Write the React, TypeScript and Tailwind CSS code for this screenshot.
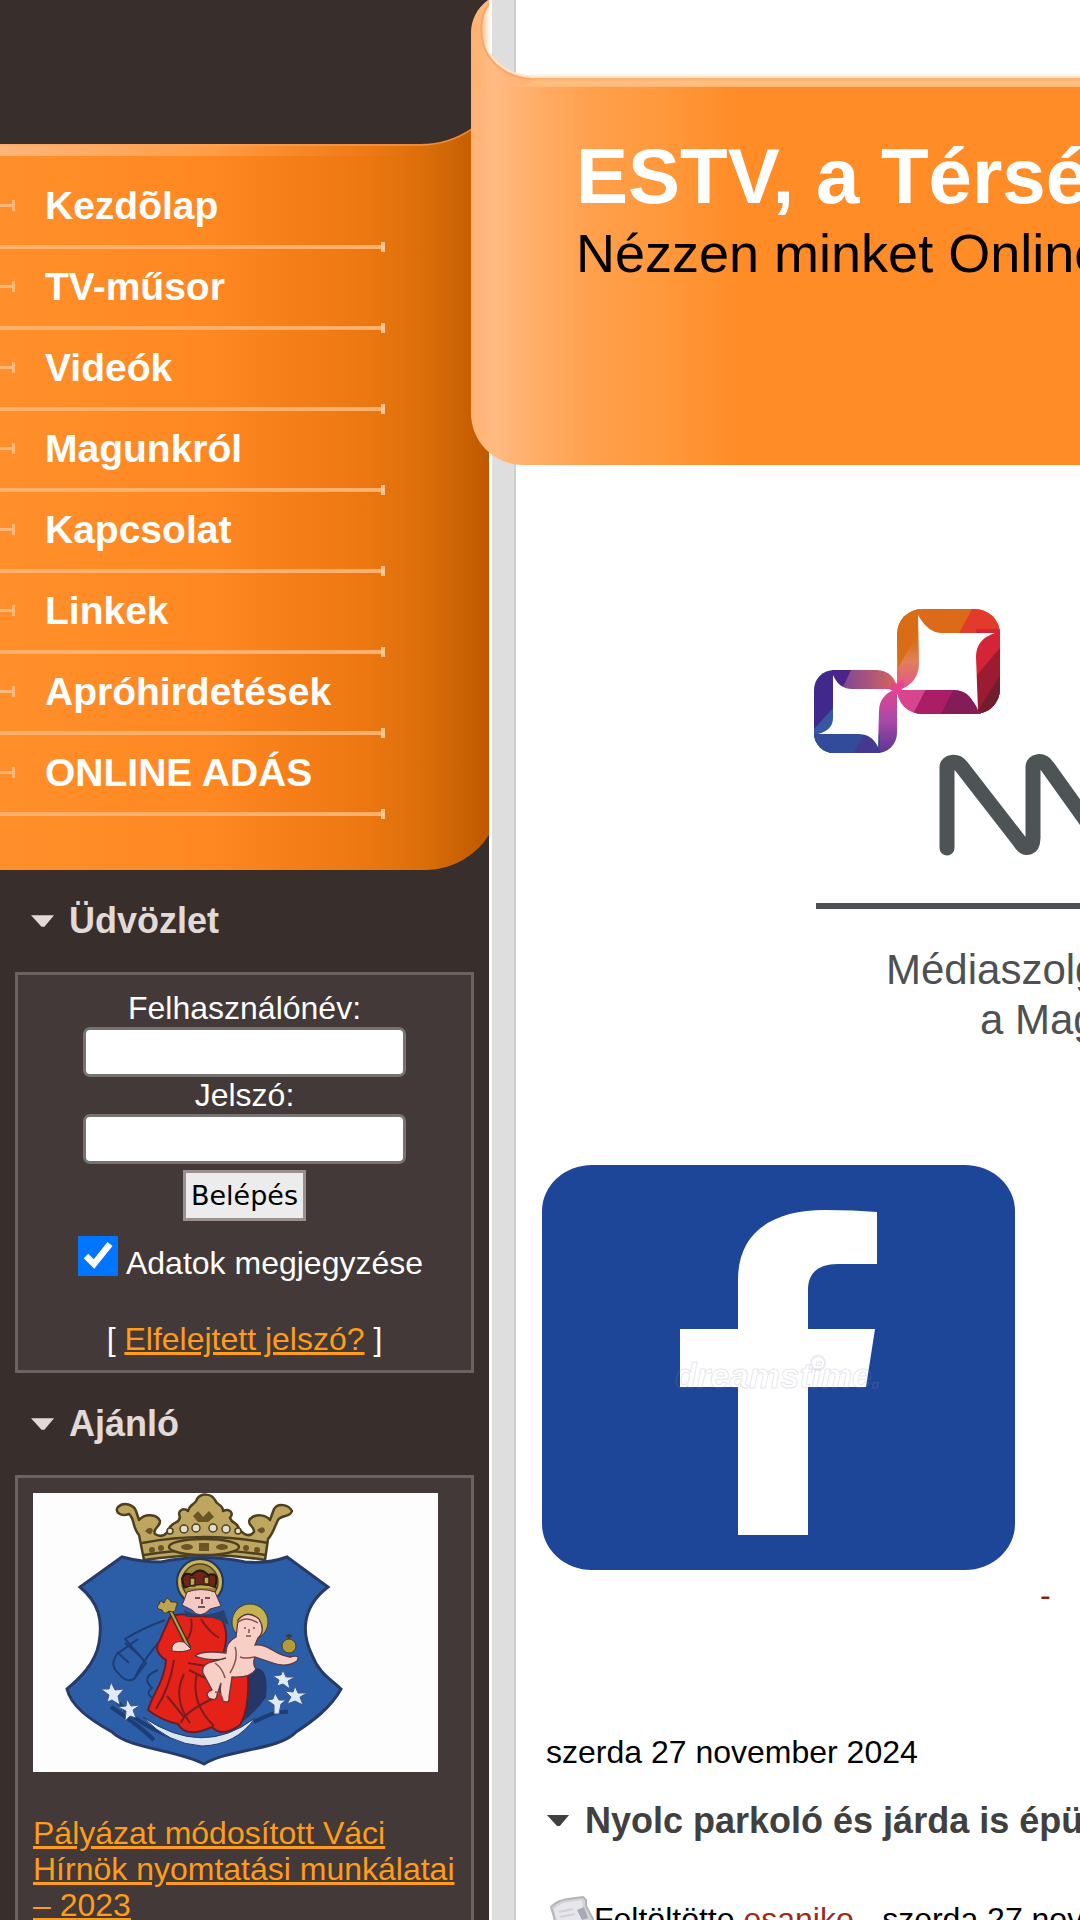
const menuItems = [
  'Kezdõlap',
  'TV-műsor',
  'Videók',
  'Magunkról',
  'Kapcsolat',
  'Linkek',
  'Apróhirdetések',
  'ONLINE ADÁS',
];

function MenuBackground() {
  return (
    <svg className="absolute bottom-0 left-0 h-[771px] w-[489px]" viewBox="0 0 489 771" aria-hidden="true">
      <defs>
        <linearGradient id="menu-fill" x1="0" x2="1" y1="0" y2="0">
          <stop offset="0" stopColor="#ff8f2b" />
          <stop offset="0.42" stopColor="#ff8822" />
          <stop offset="0.6" stopColor="#f67e19" />
          <stop offset="0.75" stopColor="#ec7711" />
          <stop offset="0.86" stopColor="#dc6f0a" />
          <stop offset="0.95" stopColor="#c96103" />
          <stop offset="1" stopColor="#bf5800" />
        </linearGradient>
        <linearGradient id="menu-shine" x1="0" x2="1" y1="0" y2="0">
          <stop offset="0" stopColor="#ffb679" />
          <stop offset="0.5" stopColor="#ff9d48" />
          <stop offset="1" stopColor="#f07a12" stopOpacity="0" />
        </linearGradient>
      </defs>
      <path d="M0 45 H420 A92 92 0 0 0 489 14 V736 A76 76 0 0 1 427 771 H0 Z" fill="url(#menu-fill)" />
      <path d="M0 45 H425 L400 57 H0 Z" fill="url(#menu-shine)" />
      <path d="M0 46 H420 A92 92 0 0 0 472 30" fill="none" stroke="#f9a55c" strokeOpacity="0.7" strokeWidth="1.5" />
    </svg>
  );
}

function SideMenu() {
  return (
    <nav className="relative pt-[24px] pb-[54px]">
      <MenuBackground />
      <ul className="relative">
        {menuItems.map((item) => (
          <li key={item} className="relative flex h-[81px] items-center pb-[6px]">
            <span className="h-[3px] w-[12px] bg-[#ffb87c]" />
            <span className="h-[11px] w-[3px] bg-[#ffb87c]" />
            <a href="#" className="ml-[30px] text-[39px] leading-none font-bold text-white">
              {item}
            </a>
            <span className="absolute bottom-0 left-0 h-[4px] w-[384px] bg-[#ffb06a]" />
            <span className="absolute -bottom-[3px] left-[381px] h-[10px] w-[4px] bg-[#ffc591]" />
          </li>
        ))}
      </ul>
    </nav>
  );
}

function Arrow({ className }: { className: string }) {
  return (
    <svg className={className} viewBox="0 0 24 13" aria-hidden="true">
      <path d="M0 0 H24 L14 12 H11 Z" fill="currentColor" />
    </svg>
  );
}

function PanelTitle({ children }: { children: string }) {
  return (
    <div className="flex h-[102px] items-center gap-[15px] pl-[16px] text-[#e2dad8]">
      <Arrow className="h-[13px] w-[23px]" />
      <h2 className="text-[36px] leading-none font-bold">{children}</h2>
    </div>
  );
}

function LoginPanel() {
  const fieldStyle = 'block h-[50px] w-[323px] rounded-[7px] border-[3px] border-[#767373] bg-white px-2 text-black';

  return (
    <form className="flex flex-col items-center border-[3px] border-[#6c6361] bg-[#423938] pt-[15px] pb-[13px] text-white">
      <label htmlFor="username" className="leading-[37px]">Felhasználónév:</label>
      <input id="username" type="text" className={fieldStyle} />
      <label htmlFor="password" className="leading-[37px]">Jelszó:</label>
      <input id="password" type="password" className={fieldStyle} />
      <button
        type="button"
        className="mt-[6px] h-[51px] w-[123px] border-[3px] border-[#989091] bg-[#ececec] font-['DejaVu_Sans'] text-[27px] leading-none text-black"
      >
        Belépés
      </button>
      <div className="mt-[15px] ml-[12px] flex gap-[8px]">
        <input id="remember" type="checkbox" defaultChecked className="size-10" />
        <label htmlFor="remember" className="pt-[9px]">Adatok megjegyzése</label>
      </div>
      <p className="mt-[40px]">
        [ <a href="#" className="text-[#ff9c1a] underline">Elfelejtett jelszó?</a> ]
      </p>
    </form>
  );
}

function Crest() {
  return (
    <svg className="h-[279px] w-[405px] bg-[#fdfdfd]" viewBox="0 0 405 279" role="img" aria-label="Címer">
      {/* crown */}
      <g fill="#bfa660" stroke="#4d4020" strokeWidth="2.5" strokeLinejoin="round">
        <path d="M111 67 L106 42 C99 34 102 26 96 21 C88 24 81 19 85 14 C91 8 101 12 103 18 L106 27 C112 20 124 21 127 28 C127 35 119 35 122 41 C130 46 135 40 137 34 C141 28 146 31 147 24 C144 18 150 14 155 18 C157 10 163 12 164 6 C168 0 178 0 182 7 C184 13 190 11 190 18 C197 15 201 20 197 25 C199 31 205 29 206 36 C212 43 217 44 221 39 C222 33 213 32 217 26 C223 20 233 22 237 27 L241 16 C245 9 256 12 259 18 C257 25 249 21 245 27 C241 35 240 41 235 46 L232 67 C190 60 150 61 111 67 Z" />
        <path d="M109 50 Q171 38 235 50" fill="none" />
        <path d="M111 62 Q171 52 232 62" fill="none" />
        <ellipse cx="171" cy="54" rx="35" ry="8" />
      </g>
      <g fill="#6b5527">
        <ellipse cx="154" cy="54" rx="6" ry="3" />
        <rect x="166" y="50" width="10" height="8" />
        <ellipse cx="189" cy="54" rx="6" ry="3" />
        <circle cx="119" cy="57" r="3" />
        <circle cx="128" cy="55" r="3" />
        <circle cx="213" cy="55" r="3" />
        <circle cx="224" cy="57" r="3" />
        <path d="M160 23 l5 -5 5 6 6 -6 5 6 -6 5 h-10 z" />
        <path d="M112 38 q5 -6 8 -1 q-2 8 -8 1 M224 37 q7 -6 8 1 q-4 5 -8 -1" />
      </g>
      <g fill="#e2dfd0" stroke="#4d4020" strokeWidth="1.5">
        <circle cx="151" cy="36" r="4" />
        <circle cx="163" cy="35" r="4" />
        <circle cx="180" cy="35" r="4" />
        <circle cx="193" cy="36" r="4" />
        <circle cx="137" cy="38" r="3" />
        <circle cx="205" cy="38" r="3" />
      </g>

      {/* shield */}
      <path
        d="M89 64 Q108 69 128 69 Q170 60 212 69 Q235 71 254 64 L295 94 C266 116 270 144 279 162 C286 180 296 185 308 196 C297 216 278 229 263 239 C247 257 195 256 171 271 C145 257 96 256 79 239 C56 226 38 213 34 196 C47 185 62 171 66 150 C70 127 66 110 47 94 Z"
        fill="#2c5ea8"
        stroke="#273b68"
        strokeWidth="3"
      />
      <g fill="none" stroke="#1d3d75" strokeWidth="2">
        <path d="M132 127 Q108 136 92 146 L113 170 L101 186 Q93 190 86 181 Q76 172 84 161 L105 146" />
        <path d="M84 159 L96 170 M92 150 L107 163 M126 149 Q107 172 102 185 M125 177 Q107 184 119 195 Q109 202 127 208" />
        <path d="M78 214 Q103 230 121 247 M83 207 Q101 230 141 245 M221 229 Q243 217 255 219" strokeWidth="4" />
      </g>

      {/* crescent */}
      <path d="M110 224 Q170 265 222 225 Q203 252 169 253 Q135 251 110 224 Z" fill="#dce5f2" stroke="#263b68" strokeWidth="1" />

      {/* robe */}
      <path d="M211 177 C232 170 235 181 233 204 Q223 219 209 229 Z" fill="#263767" />
      <path
        d="M137 124 Q148 119 157 123 L188 124 C197 141 192 153 190 162 Q204 169 215 179 C216 203 214 221 207 232 Q189 245 179 234 Q153 246 145 231 Q127 227 115 217 C120 200 132 187 133 167 Q120 159 126 149 Z"
        fill="#e52218"
        stroke="#64202a"
        strokeWidth="2"
      />
      <path d="M141 167 Q137 194 123 216 M151 181 Q139 205 157 230 M164 180 Q157 210 181 233 M181 205 Q151 219 148 230 M168 126 Q176 139 186 145 M158 126 Q161 141 150 151 M134 203 L151 224 M155 170 L173 173 M156 177 L172 185" fill="none" stroke="#7d1c20" strokeWidth="2" />

      {/* head of the mother */}
      <circle cx="167" cy="89" r="23" fill="#c9b45c" stroke="#263653" strokeWidth="2" />
      <circle cx="167" cy="89" r="18" fill="#9d843b" stroke="#51451f" strokeWidth="1.5" />
      <path d="M149 86 Q151 78 159 82 Q167 73 175 82 Q187 78 182 94 H151 Z" fill="#702319" stroke="#201912" strokeWidth="2" />
      <path d="M157 85 h5 v8 h-5 z M171 84 h5 v7 h-5 z M151 95 q17 -7 33 0" fill="#c6a943" stroke="#312719" strokeWidth="1.5" />
      <path d="M154 99 Q151 108 149 112 L159 117 Q167 127 177 116 L188 113 L182 99 Q168 94 154 99 Z" fill="#f4c9c4" stroke="#4b3545" strokeWidth="1" />
      <path d="M162 105 h5 M172 105 h5 M169 106 v5 M165 114 h7" stroke="#4b2731" strokeWidth="1.5" />
      <path d="M151 117 Q168 126 191 117 L196 132 Q171 118 153 124 Z" fill="#284270" />

      {/* sceptre */}
      <path d="M134 111 L150 143 L156 155" fill="none" stroke="#3c321f" strokeWidth="5" />
      <path d="M134 111 L150 143 L156 155" fill="none" stroke="#baa14a" strokeWidth="2" />
      <path d="M129 117 Q121 116 127 110 Q125 106 131 110 Q134 101 138 109 Q147 108 143 114 Q143 121 136 118 Q131 123 129 117" fill="#bda44d" stroke="#383425" />
      <path d="M139 154 Q141 147 151 149 L158 156 Q151 160 139 158 Z" fill="#f5cec5" stroke="#4a303b" />

      {/* child */}
      <circle cx="217" cy="129" r="18" fill="#c5b24f" stroke="#3d3f31" />
      <path d="M205 127 Q214 116 226 126 Q233 138 225 145 L222 152 C237 151 241 162 257 164 Q268 161 264 168 Q253 175 240 170 L222 164 Q219 171 223 176 Q218 185 199 184 L196 204 Q197 211 190 208 Q186 201 188 190 L184 202 Q184 209 176 205 Q171 200 179 197 L170 180 Q168 172 178 169 L193 165 Q179 169 162 163 Q168 157 193 160 Q193 149 203 144 Z" fill="#f7cfc5" stroke="#5d3645" strokeWidth="1.3" />
      <path d="M204 130 Q213 122 225 130 M211 135 h2 M220 135 h2 M216 136 v4 M213 143 h5 M202 154 Q206 165 197 180 M222 164 Q211 166 207 164 M182 170 Q190 176 192 185 M182 199 Q188 199 190 207" fill="none" stroke="#85504f" strokeWidth="1.5" />
      <circle cx="256" cy="153" r="7" fill="#b39c37" stroke="#413c2b" />
      <path d="M256 146 v-5 M253 143 h6" stroke="#413c2b" strokeWidth="2" />

      {/* stars */}
      <g fill="#dfeafa" stroke="#405987" strokeWidth="1">
        <path d="M78 189 l4 8 9 -1 -6 7 2 9 -8 -5 -5 2 2 -7 -8 -6 8 0z" />
        <path d="M94 206 l4 7 9 -1 -7 5 3 8 -6 -2 -5 5 1 -10 -8 -4 8 -1z" />
        <path d="M250 177 l3 7 9 0 -7 4 2 8 -7 -5 -6 2 2 -6 -6 -4 8 -1z" />
        <path d="M262 193 l3 7 9 0 -7 4 3 8 -8 -4 -8 3 4 -7 -6 -6 8 1z" />
        <path d="M242 200 l4 7 7 0 -5 4 -2 10 -5 0 0 -9 -7 -5 6 -1z" />
      </g>
    </svg>
  );
}

function NewsPanel() {
  return (
    <section className="border-[3px] border-[#6c6361] bg-[#423938] pt-[15px] pr-[8px] pb-[30px] pl-[15px]">
      <Crest />
      <p className="mt-[43px]">
        <a href="#" className="text-[#ff9c1a] underline">
          Pályázat módosított Váci Hírnök nyomtatási munkálatai – 2023
        </a>
      </p>
    </section>
  );
}

function Banner() {
  return (
    <header className="relative -ml-[45px] pt-[136px] pb-[184px] pl-[105px] whitespace-nowrap">
      <div className="absolute inset-x-0 top-[78px] bottom-0 rounded-bl-[52px] bg-[linear-gradient(90deg,#ffb273_0px,#ffba82_22px,#ffae68_65px,#ffa04d_120px,#ff983b_195px,#ff8c26_270px)]" />
      <div className="absolute top-[73px] right-0 left-[60px] h-[5px] bg-linear-to-b from-white to-[#ffdfbd]" />
      <div className="absolute top-[78px] right-0 left-[45px] h-[9px] bg-linear-to-b from-[#f6ae6d] via-[#ffc082] to-[#ffb873]" />
      <svg className="absolute top-0 left-0 h-[90px] w-[90px]" viewBox="0 0 90 90" aria-hidden="true">
        <defs>
          <linearGradient id="curl-inside" gradientUnits="userSpaceOnUse" x1="9" x2="20" y1="30" y2="30">
            <stop offset="0" stopColor="#ffb880" />
            <stop offset="0.6" stopColor="#ffe3cd" />
            <stop offset="1" stopColor="#ffffff" />
          </linearGradient>
          <linearGradient id="curl-body" x1="0" x2="1" y1="0" y2="0">
            <stop offset="0" stopColor="#ffb16f" />
            <stop offset="0.3" stopColor="#ffba82" />
            <stop offset="1" stopColor="#ffb376" />
          </linearGradient>
        </defs>
        <path d="M18 0 L9 14 L7 36 L19 60 H21 V0 Z" fill="url(#curl-inside)" />
        <path d="M17 0 C6 8 0 20 0 33 V90 H26 L60 83 V78 C42 77 26 68 17 54 C8 40 8 16 18 4 V0 Z" fill="url(#curl-body)" />
        <path d="M60 77 C42 76 27 67 18 54" fill="none" stroke="#ffe2c8" strokeWidth="3" />
        <path d="M60 79 C42 78 26 69 17 55 C8 40 8 16 18 4" fill="none" stroke="#fba662" strokeWidth="2" />
      </svg>
      <h1 className="relative text-[78px] leading-[80px] font-bold text-white">ESTV, a Térség Televíziója</h1>
      <p className="relative mt-[9px] text-[54px] leading-[56px] text-black">Nézzen minket Online is!</p>
    </header>
  );
}

function SponsorLogo() {
  return (
    <div className="mt-[144px] whitespace-nowrap text-[#4e5153]">
      <svg className="ml-[298px] h-[300px] w-[500px]" viewBox="0 0 500 300" role="img" aria-label="NMHH">
        <defs>
          <clipPath id="ring-big"><rect x="83" y="0" width="103" height="105" rx="25" /></clipPath>
          <clipPath id="ring-small"><rect x="0" y="61" width="83" height="83" rx="20" /></clipPath>
          <linearGradient id="ring-left" x1="0" x2="0" y1="0" y2="1">
            <stop offset="0.3" stopColor="#d96f18" />
            <stop offset="0.5" stopColor="#e0805c" />
            <stop offset="0.85" stopColor="#e54097" />
          </linearGradient>
          <linearGradient id="ring-violet" x1="0" x2="0" y1="0" y2="1">
            <stop offset="0" stopColor="#e4458f" />
            <stop offset="0.5" stopColor="#a94aa8" />
            <stop offset="1" stopColor="#5c3590" />
          </linearGradient>
          <linearGradient id="ring-mauve" x1="0" x2="1" y1="0" y2="0">
            <stop offset="0" stopColor="#7c4599" />
            <stop offset="1" stopColor="#d96658" />
          </linearGradient>
        </defs>
        <g clipPath="url(#ring-big)">
          <path d="M83 0 H106 V105 H83Z" fill="url(#ring-left)" />
          <path d="M83 0 H105 V22 L84 59Z" fill="#d86d15" />
          <path d="M104 0 H190 V25 H104Z" fill="#dd6a18" />
          <path d="M158 0 H190 V30 H142Z" fill="#e33b2b" />
          <path d="M162 20 H190 V105 H162Z" fill="#d62437" />
          <path d="M186 39 V105 H162 V67Z" fill="#9c1b31" />
          <path d="M186 66 V105 H162Z" fill="#711d2e" />
          <path d="M83 80 H150 L166 105 H83Z" fill="#d8458f" />
          <path d="M112 80 H150 L168 105 H99Z" fill="#ab1d66" />
          <path d="M140 80 H150 L168 105 H127Z" fill="#841c57" />
        </g>
        <path d="M104 6 Q114 24 128 24 H181 Q162 30 162 48 L164 101 Q156 81 140 81 H85 Q105 74 105 54 Z" fill="#fff" />
        <g clipPath="url(#ring-small)">
          <path d="M0 61 H20 V144 H0Z" fill="#40288d" />
          <path d="M0 120 L20 98 V144 H0Z" fill="#3559a0" />
          <path d="M18 61 H38 L30 82 H18Z" fill="#4a2488" />
          <path d="M37 61 H83 V82 H27Z" fill="url(#ring-mauve)" />
          <path d="M64 78 H84 V144 H64Z" fill="url(#ring-violet)" />
          <path d="M0 125 H66 V144 H0Z" fill="#334b9b" />
          <path d="M50 125 H58 L66 144 H40Z" fill="#45388f" />
        </g>
        <path d="M19 66 Q25 80 38 80 H81 Q65 87 65 102 L64 138 Q58 125 44 125 H4 Q19 121 19 109 Z" fill="#fff" />
        <path d="M78 73 Q83 77 89 70 L90 78 Q86 81 86 88 L81 82 L76 81 Z" fill="#e4438f" />
        <path
          d="M133 239 V158 C133 153 142 151 147 157 L206 233 C212 242 219 239 219 229 V158 C219 152 228 150 233 157 L286 231 C294 242 305 240 305 229 V154"
          fill="none"
          stroke="#4e5356"
          strokeWidth="15"
          strokeLinecap="round"
          strokeLinejoin="round"
        />
        <path d="M2 297 H500" stroke="#4e5153" strokeWidth="6" />
      </svg>
      <p className="mt-[36px] pl-[370px] text-[42px] leading-[50px]">Médiaszolgáltatás</p>
      <p className="pl-[464px] text-[42px] leading-[50px]">a Magyar</p>
    </div>
  );
}

function FacebookLink() {
  return (
    <div className="mt-[120px] flex items-end pl-[26px]">
      <a href="#" className="mb-[43px] shrink-0" aria-label="Facebook">
        <svg className="h-[405px] w-[473px]" viewBox="0 0 473 405" aria-hidden="true">
          <rect width="473" height="405" rx="50" ry="46" fill="#1d4699" />
          <path
            d="M196 370 V222 H138 V164 H196 V115 C196 66 232 45 283 45 Q312 45 335 47 V99 H296 C276 99 266 108 266 125 V164 H333 L324 222 H266 V370 Z"
            fill="#fff"
          />
          <text x="133" y="223" fontFamily="Liberation Sans" fontStyle="italic" fontSize="35" fontWeight="bold" fill="none" stroke="#8d96ab" strokeOpacity="0.25">dreamstime.</text>
          <circle cx="276" cy="198" r="7" fill="none" stroke="#8d96ab" strokeOpacity="0.2" strokeWidth="2" />
        </svg>
      </a>
      <a href="#" className="ml-[25px] text-[#8b1d00]">-</a>
    </div>
  );
}

function Article() {
  return (
    <article className="pl-[30px] whitespace-nowrap">
      <p className="mt-[121px]">szerda 27 november 2024</p>
      <div className="mt-[30px] flex items-center gap-[15px] text-[#404040]">
        <Arrow className="h-[12px] w-[24px] shrink-0" />
        <h2 className="text-[36px] leading-[42px] font-bold">Nyolc parkoló és járda is épül</h2>
      </div>
      <div className="mt-[53px] flex">
        <svg className="ml-[2px] h-[42px] w-[46px] shrink-0" viewBox="0 0 46 42" aria-hidden="true">
          <path d="M3 12 Q10 5 20 4 L35 2 L38 5 L38 11 L45 24 L42 40 L9 38 L6 22 Z" fill="#d3d3da" stroke="#b4b4ba" strokeWidth="2" strokeLinejoin="round" />
          <path d="M6 14 Q12 8 21 7 L34 5 L36 22 L38 38 H12 Z" fill="#e6e6ec" />
          <path d="M29 15 L36 12 L40 23 L34 25 Z" fill="#a9a9b3" />
          <path d="M11 17 L25 14 M12 22 L27 19" stroke="#d0d0d8" strokeWidth="2" />
        </svg>
        <p className="pt-[6px]">
          Feltöltötte <a href="#" className="text-[#9b2c1a]">esaniko</a> - szerda 27 november 2024
        </p>
      </div>
    </article>
  );
}

export default function App() {
  return (
    <div className="flex h-screen overflow-hidden bg-white font-['Liberation_Sans',Arial,sans-serif] text-[32px] leading-[36px] text-black">
      <aside className="w-[489px] shrink-0 bg-[#382f2d] pt-[144px]">
        <SideMenu />
        <div className="px-[15px]">
          <PanelTitle>Üdvözlet</PanelTitle>
          <LoginPanel />
          <PanelTitle>Ajánló</PanelTitle>
          <NewsPanel />
        </div>
      </aside>
      <div className="ml-[3px] w-[24px] shrink-0 border-r-2 border-[#cfcfcf] bg-[#dedede]" />
      <main className="min-w-0 flex-1">
        <Banner />
        <SponsorLogo />
        <FacebookLink />
        <Article />
      </main>
    </div>
  );
}
